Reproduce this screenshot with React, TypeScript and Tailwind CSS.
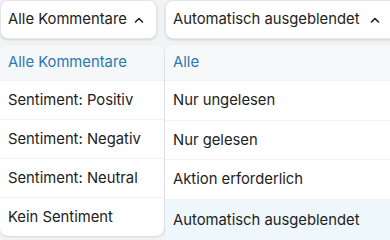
import React from "react";

function Chevron() {
  return (
    <svg width="10" height="6" viewBox="0 0 10 6" fill="none" className="shrink-0">
      <path d="M1.5 5L5 1.5L8.5 5" stroke="#222" strokeWidth="1.6" strokeLinecap="round" strokeLinejoin="round" />
    </svg>
  );
}

export default function App() {
  const left = ["Alle Kommentare", "Sentiment: Positiv", "Sentiment: Negativ", "Sentiment: Neutral", "Kein Sentiment"];
  const leftH = ["h-[35px]", "h-[39px]", "h-[39px]", "h-[39px]", "h-[39px]"];
  const right = ["Alle", "Nur ungelesen", "Nur gelesen", "Aktion erforderlich", "Automatisch ausgeblendet"];
  const rightH = ["h-[35px]", "h-[40px]", "h-[39px]", "h-[40px]", "h-[41px]"];
  return (
    <div className="w-[390px] h-[240px] overflow-hidden bg-[#f2f3f5] flex gap-[1px] text-[14.8px] text-[#222]" style={{ fontFamily: "Inter, 'Noto Sans', sans-serif" }}>
      <div className="w-[164px] shrink-0 flex flex-col">
        <div className="w-[157px] h-[39px] bg-white border border-[#e4e6ea] rounded-lg shadow-sm flex items-center justify-between pl-[7px] pr-[12px]">
          <span>Alle Kommentare</span>
          <Chevron />
        </div>
        <div className="mt-[6px] bg-white rounded-lg shadow-sm flex flex-col">
          {left.map((t, i) => (
            <div
              key={t}
              className={`${leftH[i]} flex items-center pl-[8px] ${i > 0 ? "border-t border-[#f1f2f4]" : ""} ${i === 0 ? "bg-[#f5f7f9] text-[#2a79b0] rounded-t-lg" : ""}`}
            >
              {t}
            </div>
          ))}
        </div>
      </div>
      <div className="w-[240px] shrink-0 flex flex-col">
        <div className="w-[240px] h-[39px] bg-white border border-[#e4e6ea] rounded-lg shadow-sm flex items-center pl-[7px]">
          <span>Automatisch ausgeblendet</span>
          <span className="ml-[10px]"><Chevron /></span>
        </div>
        <div className="mt-[6px] bg-white rounded-lg shadow-sm flex flex-col">
          {right.map((t, i) => (
            <div
              key={t}
              className={`${rightH[i]} flex items-center pl-[8px] ${i > 0 ? "border-t border-[#f1f2f4]" : ""} ${i === 0 ? "bg-[#f7f8fa] text-[#2a79b0] rounded-t-lg" : ""} ${i === 4 ? "bg-[#edf7fc]" : ""}`}
            >
              {t}
            </div>
          ))}
        </div>
      </div>
    </div>
  );
}
